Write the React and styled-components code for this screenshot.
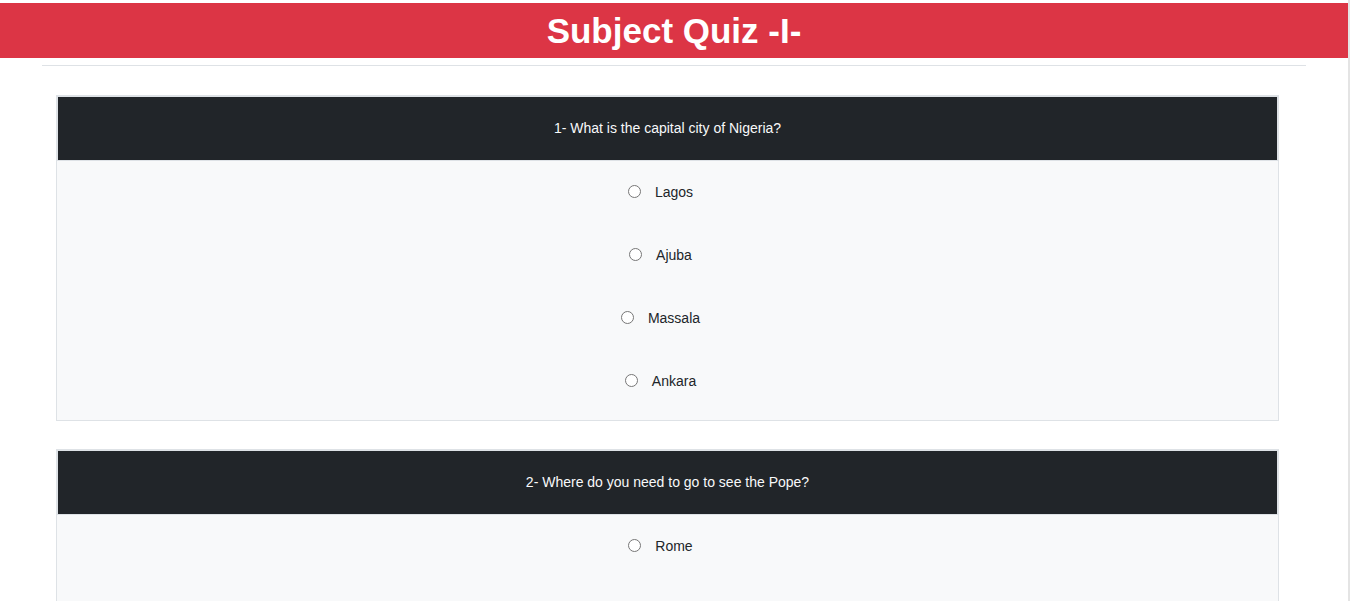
import styled, { createGlobalStyle } from "styled-components";

const GlobalStyle = createGlobalStyle`
  html {
    overflow: hidden;
  }
  body {
    margin: 0;
    background: #ffffff;
    font-family: "Liberation Sans", Arial, sans-serif;
    color: #212529;
  }
`;

// STYLING
const Page = styled.div`
  width: 1350px;
  min-height: 601px;
  padding-top: 3px;
  border-right: 2px solid #e4e4e4;
  box-sizing: border-box;
`;
const Header = styled.header`
  height: 55px;
  background-color: #dc3545;
  display: flex;
  align-items: center;
  justify-content: center;
`;
const Title = styled.h1`
  margin: 0;
  color: #ffffff;
  font-size: 35px;
  font-weight: 700;
  line-height: 1;
`;
const Rule = styled.hr`
  margin: 7px 42px 0;
  border: none;
  border-top: 1px solid #dee2e6;
`;
const Main = styled.main`
  padding: 29px 69px 0 56px;
  display: flex;
  flex-direction: column;
  gap: 28px;
`;
const Card = styled.section`
  border: 1px solid #dee2e6;
  background-color: #f8f9fa;
`;
const Question = styled.div`
  background-color: #212529;
  border: 1px solid #dee2e6;
  color: #f8f9fa;
  text-align: center;
  font-size: 14px;
  line-height: 23px;
  padding: 20px 0;
`;
const Options = styled.div`
  display: flex;
  flex-direction: column;
  align-items: center;
  gap: 42px;
  padding: 20px 0 29px;
`;
const Option = styled.label`
  display: flex;
  align-items: center;
  gap: 14px;
  padding-right: 14px;
  height: 21px;
  font-size: 14px;
  color: #212529;
`;
const Radio = styled.input`
  margin: 0;
  width: 13px;
  height: 13px;
`;

const quiz = [
  {
    q: "1- What is the capital city of Nigeria?",
    options: ["Lagos", "Ajuba", "Massala", "Ankara"],
  },
  {
    q: "2- Where do you need to go to see the Pope?",
    options: ["Rome", "Paris", "Vatican", "Madrid"],
  },
];

const App = () => {
  return (
    <Page>
      <GlobalStyle />
      <Header>
        <Title>Subject Quiz -I-</Title>
      </Header>
      <Rule />
      <Main>
        {quiz.map((item, i) => (
          <Card key={i}>
            <Question>{item.q}</Question>
            <Options>
              {item.options.map((opt) => (
                <Option key={opt}>
                  <Radio type="radio" name={`q${i}`} value={opt} />
                  {opt}
                </Option>
              ))}
            </Options>
          </Card>
        ))}
      </Main>
    </Page>
  );
};

export default App;
